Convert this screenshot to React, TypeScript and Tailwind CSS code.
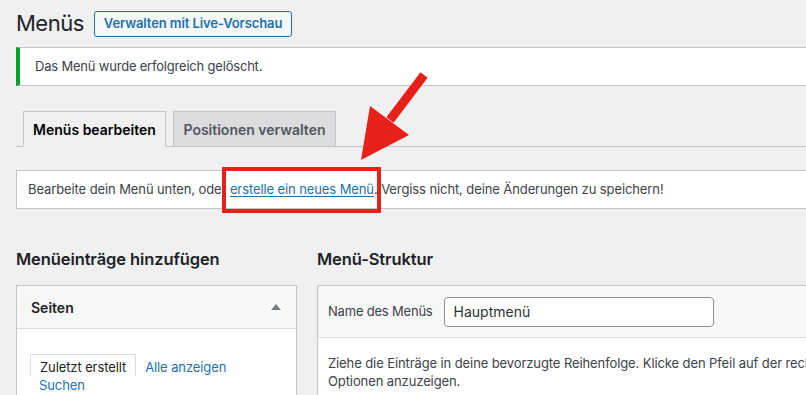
import React from "react";

export default function App() {
  return (
    <div
      className="relative w-[806px] h-[395px] overflow-hidden bg-[#f0f0f1] text-[#3c434a]"
      style={{ fontFamily: "Inter, 'Noto Sans', Arial, sans-serif" }}
    >
      <div className="w-[840px] pl-4">
        {/* Header */}
        <div className="flex items-center pt-[9px] h-[38px]">
          <h1 className="text-[22px] leading-[29px] font-normal text-[#1d2327] tracking-[-0.5px]">Menüs</h1>
          <button className="ml-[10px] h-[26px] px-[9px] rounded-[3px] border border-[#2271b1] bg-[#f6f7f7] text-[#2271b1] text-[13px] font-semibold leading-none tracking-[-0.1px]">
            Verwalten mit Live-Vorschau
          </button>
        </div>

        {/* Notice */}
        <div className="mt-[9px] h-[39px] flex items-center bg-white border border-[#c3c4c7] border-l-4 border-l-[#00a32a] pl-[15px] text-[13px] tracking-[-0.2px]">
          Das Menü wurde erfolgreich gelöscht.
        </div>

        {/* Tabs */}
        <div className="mt-[25px] flex items-end border-b border-[#c3c4c7] h-[36px]">
          <div className="ml-[7px] w-[143px] h-[36px] flex items-center justify-center border border-[#c3c4c7] border-b-[#f0f0f1] bg-[#f0f0f1] text-[14px] font-semibold text-[#000] -mb-px">
            Menüs bearbeiten
          </div>
          <div className="ml-[7px] w-[163px] h-[35px] flex items-center justify-center border border-[#c3c4c7] border-b-0 bg-[#dcdcde] text-[14px] font-semibold text-[#50575e]">
            Positionen verwalten
          </div>
        </div>

        {/* Manage box */}
        <div className="mt-[23px] h-[39px] flex items-center bg-white border border-[#c3c4c7] pl-[11px] text-[13px] tracking-[-0.1px] whitespace-nowrap">
          <span>Bearbeite dein Menü unten, oder&nbsp;</span>
          <a className="text-[#2271b1] underline underline-offset-2">erstelle ein neues Menü</a>
          <span>. Vergiss nicht, deine Änderungen zu speichern!</span>
        </div>

        {/* Columns */}
        <div className="flex gap-5 mt-[38px]">
          {/* Left column */}
          <div className="w-[281px] shrink-0">
            <h2 className="text-[16.5px] leading-[24px] font-semibold text-[#1d2327] tracking-[-0.1px]">Menüeinträge hinzufügen</h2>
            <div className="mt-[14px] border border-[#c3c4c7] bg-white h-[200px]">
              <div className="h-[43px] flex items-center justify-between bg-[#f6f7f7] border-b border-[#dcdcde] pl-[14px] pr-[14px]">
                <span className="text-[14px] font-semibold text-[#1d2327]">Seiten</span>
                <svg width="10" height="6" viewBox="0 0 10 6" className="mr-[1px]">
                  <polygon points="5,0 10,6 0,6" fill="#787c82" />
                </svg>
              </div>
              <div className="pt-[25px] pl-[13px] text-[13px] leading-[18px] tracking-[-0.1px]">
                <div className="flex">
                  <div className="border border-b-0 border-[#dcdcde] px-[9px] pt-[3px] text-[#1d2327]">Zuletzt erstellt</div>
                  <div className="px-[9px] pt-[4px] text-[#2271b1]">Alle anzeigen</div>
                </div>
                <div className="px-[9px] text-[#2271b1]">Suchen</div>
              </div>
            </div>
          </div>

          {/* Right column */}
          <div className="flex-1">
            <h2 className="text-[16.5px] leading-[24px] font-semibold text-[#1d2327] tracking-[-0.1px]">Menü-Struktur</h2>
            <div className="mt-[14px] border border-[#c3c4c7] bg-white h-[200px]">
              <div className="h-[52px] flex items-center bg-[#f6f7f7] border-b border-[#dcdcde] pl-[10px]">
                <span className="text-[13px] text-[#3c434a] tracking-[-0.2px]">Name des Menüs</span>
                <div className="ml-[11px] w-[270px] h-[30px] flex items-center rounded-[4px] border border-[#8c8f94] bg-white pl-[9px] text-[14px] text-[#2c3338]">
                  Hauptmenü
                </div>
              </div>
              <div className="pt-[16px] pl-[10px] text-[13px] leading-[18px] tracking-[-0.1px] whitespace-nowrap">
                <div>Ziehe die Einträge in deine bevorzugte Reihenfolge. Klicke den Pfeil auf der rechten Seite des Eintrags, um weitere</div>
                <div>Optionen anzuzeigen.</div>
              </div>
            </div>
          </div>
        </div>
      </div>

      {/* Red highlight box */}
      <div className="absolute left-[222px] top-[167px] w-[159px] h-[46px] border-4 border-[#e8201a] pointer-events-none" />

      {/* Red arrow */}
      <svg className="absolute left-0 top-0 pointer-events-none" width="806" height="395">
        <line x1="424" y1="75" x2="390" y2="120" stroke="#e8201a" strokeWidth="9" />
        <polygon points="361,160 370,106 409,135" fill="#e8201a" />
      </svg>
    </div>
  );
}
